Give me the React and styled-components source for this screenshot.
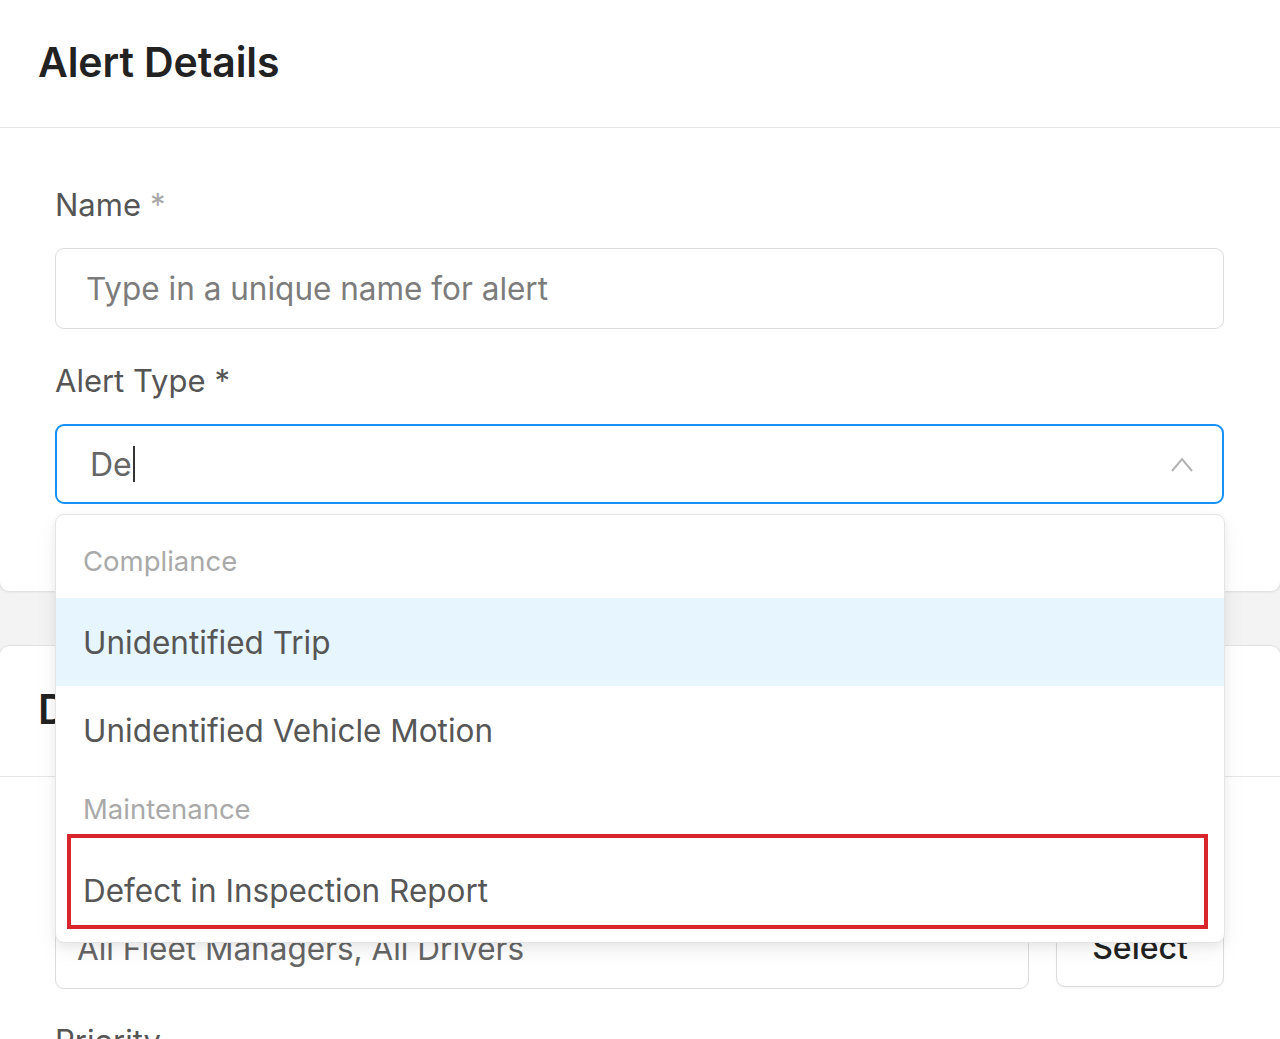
import React from 'react';
import styled, { createGlobalStyle } from 'styled-components';

const GlobalStyle = createGlobalStyle`
	html, body {
		margin: 0;
		padding: 0;
		background: #f3f3f3;
	}
	body {
		font-family: Inter, "Noto Sans", "Liberation Sans", sans-serif;
		-webkit-font-smoothing: antialiased;
	}
	* {
		box-sizing: border-box;
	}
`;

const Page = styled.div`
	width: 1280px;
	height: 1039px;
	overflow: hidden;
	display: flex;
	flex-direction: column;
	gap: 55px;
`;

const Card = styled.section`
	background: #fff;
	border-radius: ${(p) => (p.$top ? '0 0 9px 9px' : '9px 9px 0 0')};
	box-shadow: 0 0 0 1px #e2e2e2, 0 1px 3px rgba(0, 0, 0, 0.08);
	flex-shrink: 0;
`;

const CardHeader = styled.header`
	height: ${(p) => p.$height}px;
	display: flex;
	align-items: center;
	padding: 0 38px 4px;
	border-bottom: 1px solid #e6e6e6;
`;

const CardTitle = styled.h2`
	margin: 0;
	font-size: 41px;
	font-weight: 600;
	color: #222;
	letter-spacing: -0.1px;
`;

const CardBody = styled.div`
	padding: ${(p) => p.$top}px 56px ${(p) => p.$bottom}px 55px;
	display: flex;
	flex-direction: column;
	gap: 32px;
`;

const Field = styled.div`
	display: flex;
	flex-direction: column;
	gap: 23px;
`;

const Label = styled.label`
	height: 40px;
	line-height: 40px;
	font-size: 31px;
	color: #555;
`;

const Star = styled.span`
	color: ${(p) => (p.$light ? '#a8a8a8' : '#555')};
	margin-left: 9px;
`;

const TextBox = styled.div`
	flex: 1 1 auto;
	min-width: 0;
	height: 81px;
	display: flex;
	align-items: center;
	padding: 0 ${(p) => p.$pad || 30}px;
	border: 1px solid #dcdcdc;
	border-radius: 9px;
	font-size: 31.5px;
	color: ${(p) => (p.$placeholder ? '#7c7c7c' : '#666')};
	background: #fff;
	white-space: nowrap;
	overflow: hidden;
`;

const SelectWrap = styled.div`
	position: relative;
`;

const SelectBox = styled.div`
	height: 80px;
	display: flex;
	align-items: center;
	justify-content: space-between;
	padding: 0 28px 0 33px;
	border: 2px solid #1791f5;
	border-radius: 9px;
	font-size: 32px;
	color: #666;
`;

const Typed = styled.span`
	display: flex;
	align-items: center;
`;

const Caret = styled.span`
	display: inline-block;
	width: 2px;
	height: 36px;
	margin-left: 1px;
	background: #333;
`;

const Dropdown = styled.div`
	position: absolute;
	top: calc(100% + 10px);
	left: 0;
	right: -1px;
	z-index: 10;
	background: #fff;
	border: 1px solid #e4e4e4;
	border-radius: 9px;
	padding: 11px 0 8px;
	box-shadow: 0 4px 10px rgba(0, 0, 0, 0.06), 0 8px 24px rgba(0, 0, 0, 0.05);
`;

const GroupTitle = styled.div`
	height: 72px;
	display: flex;
	align-items: center;
	padding: 0 27px 2px;
	font-size: 27.5px;
	color: #a9a9a9;
`;

const Option = styled.div`
	position: relative;
	height: 88px;
	display: flex;
	align-items: center;
	padding: 0 27px;
	font-size: 31.5px;
	color: #565656;
	background: ${(p) => (p.$active ? '#e6f5fe' : 'transparent')};
`;

const Highlight = styled.span`
	position: absolute;
	top: -12px;
	left: 11px;
	right: 16px;
	bottom: 5px;
	border: 4px solid #d8262c;
	pointer-events: none;
`;

const Row = styled.div`
	display: flex;
	gap: 27px;
`;

const Button = styled.button`
	flex: none;
	width: 168px;
	height: 79px;
	border: 1px solid #dcdcdc;
	border-radius: 9px;
	background: #fff;
	box-shadow: 0 2px 2px rgba(0, 0, 0, 0.04);
	font-family: inherit;
	font-size: 32px;
	font-weight: 500;
	color: #222;
`;

const ChevronUp = () => (
	<svg width="24" height="18" viewBox="0 0 24 18" fill="none">
		<polyline points="2,16 12,4 22,16" stroke="#b3b3b3" strokeWidth="2" />
	</svg>
);

const options = [
	{ group: 'Compliance', items: ['Unidentified Trip', 'Unidentified Vehicle Motion'] },
	{ group: 'Maintenance', items: ['Defect in Inspection Report'] },
];

const App = () => {
	return (
		<>
			<GlobalStyle />
			<Page>
				<Card $top>
					<CardHeader $height={128}>
						<CardTitle>Alert Details</CardTitle>
					</CardHeader>
					<CardBody $top={57} $bottom={87}>
						<Field>
							<Label>
								Name<Star $light>*</Star>
							</Label>
							<TextBox $placeholder>Type in a unique name for alert</TextBox>
						</Field>
						<Field>
							<Label>
								Alert Type<Star>*</Star>
							</Label>
							<SelectWrap>
								<SelectBox>
									<Typed>
										De
										<Caret />
									</Typed>
									<ChevronUp />
								</SelectBox>
								<Dropdown>
									{options.map((g) => (
										<div key={g.group}>
											<GroupTitle>{g.group}</GroupTitle>
											{g.items.map((item) => (
												<Option key={item} $active={item === 'Unidentified Trip'}>
													{item}
													{item === 'Defect in Inspection Report' && <Highlight />}
												</Option>
											))}
										</div>
									))}
								</Dropdown>
							</SelectWrap>
						</Field>
					</CardBody>
				</Card>
				<Card>
					<CardHeader $height={131}>
						<CardTitle>Delivery</CardTitle>
					</CardHeader>
					<CardBody $top={68} $bottom={40}>
						<Field>
							<Label>
								Send Notifications To<Star>*</Star>
							</Label>
							<Row>
								<TextBox $pad={21}>All Fleet Managers, All Drivers</TextBox>
								<Button>Select</Button>
							</Row>
						</Field>
						<Field>
							<Label>Priority</Label>
						</Field>
					</CardBody>
				</Card>
			</Page>
		</>
	);
};

export default App;
